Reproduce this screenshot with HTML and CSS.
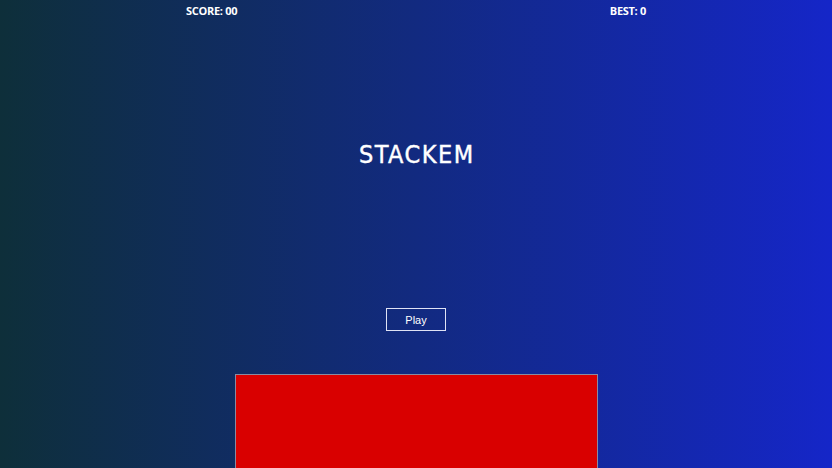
FILE: index.html
```html
<!DOCTYPE html>
<html>
<head>
<meta charset="utf-8">
<link rel="stylesheet" href="styles.css">
</head>
<body>
<div class="game">
  <header class="hud">
    <span class="score">SCORE: 00</span>
    <span class="best">BEST: 0</span>
  </header>
  <h1 class="title">STACKEM</h1>
  <button class="play">Play</button>
  <div class="base"></div>
</div>
</body>
</html>
```
FILE: styles.css
```css
html, body {
  margin: 0;
  padding: 0;
  width: 832px;
  height: 468px;
  overflow: hidden;
}
.game {
  width: 832px;
  height: 468px;
  background: linear-gradient(to right, #0e2f3a 0%, #122a80 50%, #1526c8 100%);
  display: flex;
  flex-direction: column;
  align-items: center;
  color: #fff;
  font-family: "Open Sans", "Liberation Sans", sans-serif;
}
.hud {
  width: 460px;
  display: flex;
  justify-content: space-between;
  font-weight: 700;
  font-size: 11px;
  line-height: 14px;
  padding-top: 4px;
  letter-spacing: -0.3px;
}
.title {
  margin: 122px 0 0 0;
  font-family: "DejaVu Sans Condensed", "DejaVu Sans", sans-serif;
  font-weight: normal;
  font-size: 25px;
  line-height: 30px;
  letter-spacing: 1.5px;
  padding-left: 1.5px;
  -webkit-text-stroke: 0.4px #fff;
}
.play {
  margin-top: 138px;
  width: 60px;
  height: 23px;
  background: transparent;
  border: 1px solid #dfe3f5;
  color: #fff;
  font-family: "Liberation Sans", Arial, sans-serif;
  font-size: 11px;
  padding: 0;
}
.base {
  margin-top: 43px;
  width: 361px;
  flex: 1;
  background: #d90000;
  border: 1px solid #8a8aa0;
  border-bottom: none;
}
```
